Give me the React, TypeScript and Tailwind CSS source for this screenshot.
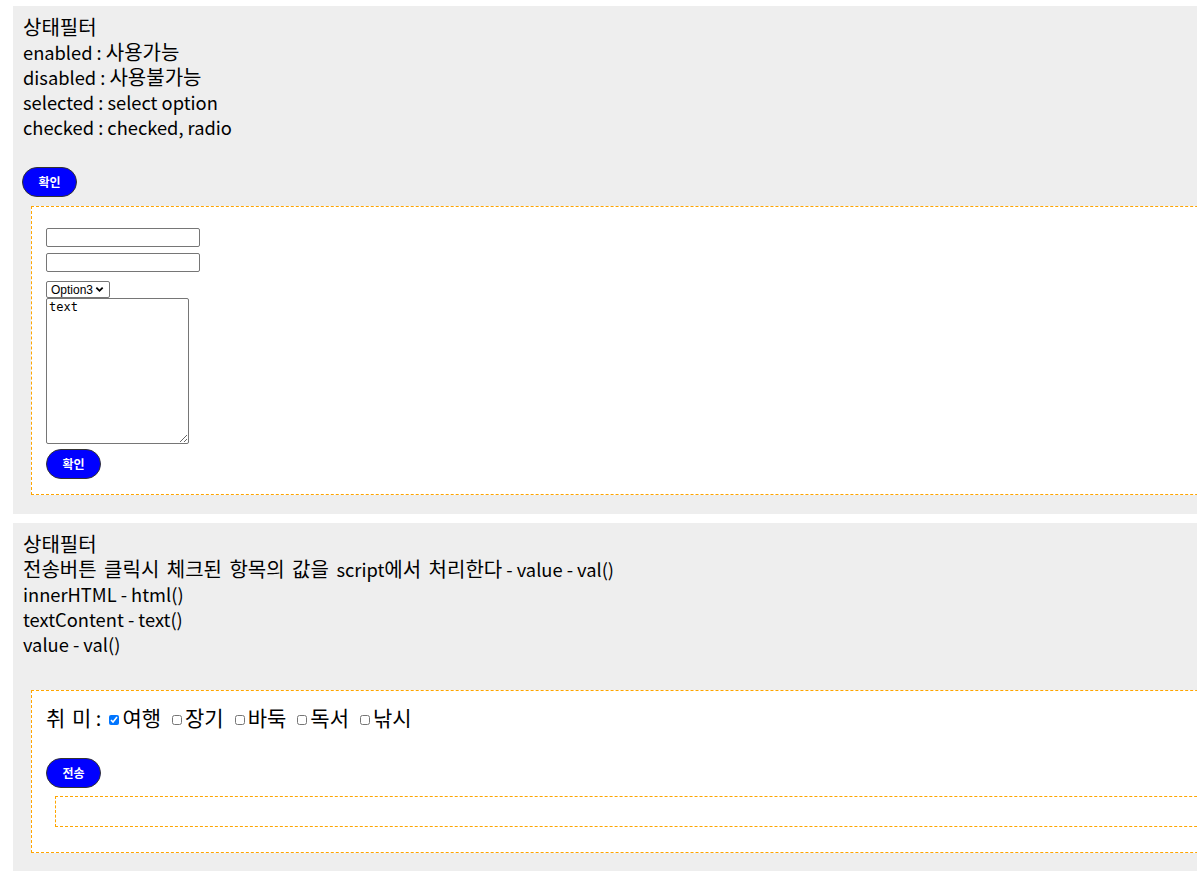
import React from 'react'

const body = "font-['Noto_Sans_CJK_KR','Noto_Sans',sans-serif]"

// 한글 구간은 글리프가 조금 더 크게 보여서 따로 키움
function K({ children }: { children: React.ReactNode }) {
    return <span className="text-[20px] leading-[20px] [word-spacing:3px]">{children}</span>
}

function Line({ children }: { children: React.ReactNode }) {
    return <div className="h-[25px] leading-[25px] whitespace-nowrap">{children}</div>
}

function BlueButton({ label }: { label: string }) {
    return (
        <button
            type="button"
            className="w-[55px] h-[30px] rounded-full bg-[#0000ff] border border-[#333] text-white text-[12px] font-bold leading-none"
        >
            {label}
        </button>
    )
}

function Check({ label, checked }: { label: string; checked?: boolean }) {
    return (
        <label className="flex items-center">
            <input
                type="checkbox"
                defaultChecked={checked}
                className="w-[10px] h-[10px] mr-[3px] mt-[4px] accent-[#0075ff]"
            />
            <span className="text-[21px] leading-[25px]">{label}</span>
        </label>
    )
}

export default function App() {
    return (
        <div className={`w-full min-h-[890px] overflow-hidden bg-white text-black ${body}`}>
            {/* 첫번째 패널 */}
            <section className="w-[1400px] ml-[13px] mt-[6px] bg-[#eeeeee] pt-[9px] pl-[10px] pb-[19px]">
                <div className="text-[18.3px]">
                    <Line><K>상태필터</K></Line>
                    <Line>enabled : <K>사용가능</K></Line>
                    <Line>disabled : <K>사용불가능</K></Line>
                    <Line>selected : select option</Line>
                    <Line>checked : checked, radio</Line>
                </div>
                <div className="mt-[27px] -ml-[1px]">
                    <BlueButton label="확인" />
                </div>
                <div className="mt-[9px] ml-[8px] border border-dashed border-[#ffa500] bg-white pt-[21px] pl-[14px] pb-[15px]">
                    <div className="flex flex-col items-start">
                        <input type="text" className="w-[154px] h-[19px] border border-[#767676] rounded-[2px] bg-white" />
                        <input type="text" className="mt-[6px] w-[154px] h-[19px] border border-[#767676] rounded-[2px] bg-white" />
                        <div className="mt-[9px] h-[17px] w-[64px] flex items-center border border-[#767676] rounded-[2px] bg-white pl-[4px] text-[12px] font-['Liberation_Sans',sans-serif]">
                            <span>Option3</span>
                            <svg viewBox="0 0 10 10" className="w-[9px] h-[9px] ml-[2px]">
                                <path d="M1.5 3 L5 6.5 L8.5 3" fill="none" stroke="#000" strokeWidth="2" />
                            </svg>
                        </div>
                        <textarea
                            defaultValue="text"
                            className="w-[143px] h-[146px] border border-[#767676] rounded-[2px] bg-white px-[2px] pt-0 text-[12px] leading-[16px] font-['DejaVu_Sans_Mono',monospace] resize"
                        />
                        <div className="mt-[5px]">
                            <BlueButton label="확인" />
                        </div>
                    </div>
                </div>
            </section>

            {/* 두번째 패널 */}
            <section className="w-[1400px] ml-[13px] mt-[9px] bg-[#eeeeee] pt-[9px] pl-[10px] pb-[18px]">
                <div className="text-[18.3px]">
                    <Line><K>상태필터</K></Line>
                    <Line>
                        <K>전송버튼 클릭시 체크된 항목의 값을 </K>script<K>에서 처리한다</K> - value - val()
                    </Line>
                    <Line>innerHTML - html()</Line>
                    <Line>textContent - text()</Line>
                    <Line>value - val()</Line>
                </div>
                <div className="mt-[33px] ml-[8px] border border-dashed border-[#ffa500] bg-white pt-[14px] pl-[14px] pb-[25px]">
                    <div className="flex items-center h-[25px] text-[20px] leading-[25px]">
                        <span className="mr-[8px] whitespace-nowrap">
                            <span className="text-[21px] [word-spacing:2px]">취 미</span> :
                        </span>
                        <div className="flex items-center gap-[11px]">
                            <Check label="여행" checked />
                            <Check label="장기" />
                            <Check label="바둑" />
                            <Check label="독서" />
                            <Check label="낚시" />
                        </div>
                    </div>
                    <div className="mt-[28px]">
                        <BlueButton label="전송" />
                    </div>
                    <div className="mt-[8px] ml-[9px] h-[31px] border border-dashed border-[#ffa500]" />
                </div>
            </section>
        </div>
    )
}
